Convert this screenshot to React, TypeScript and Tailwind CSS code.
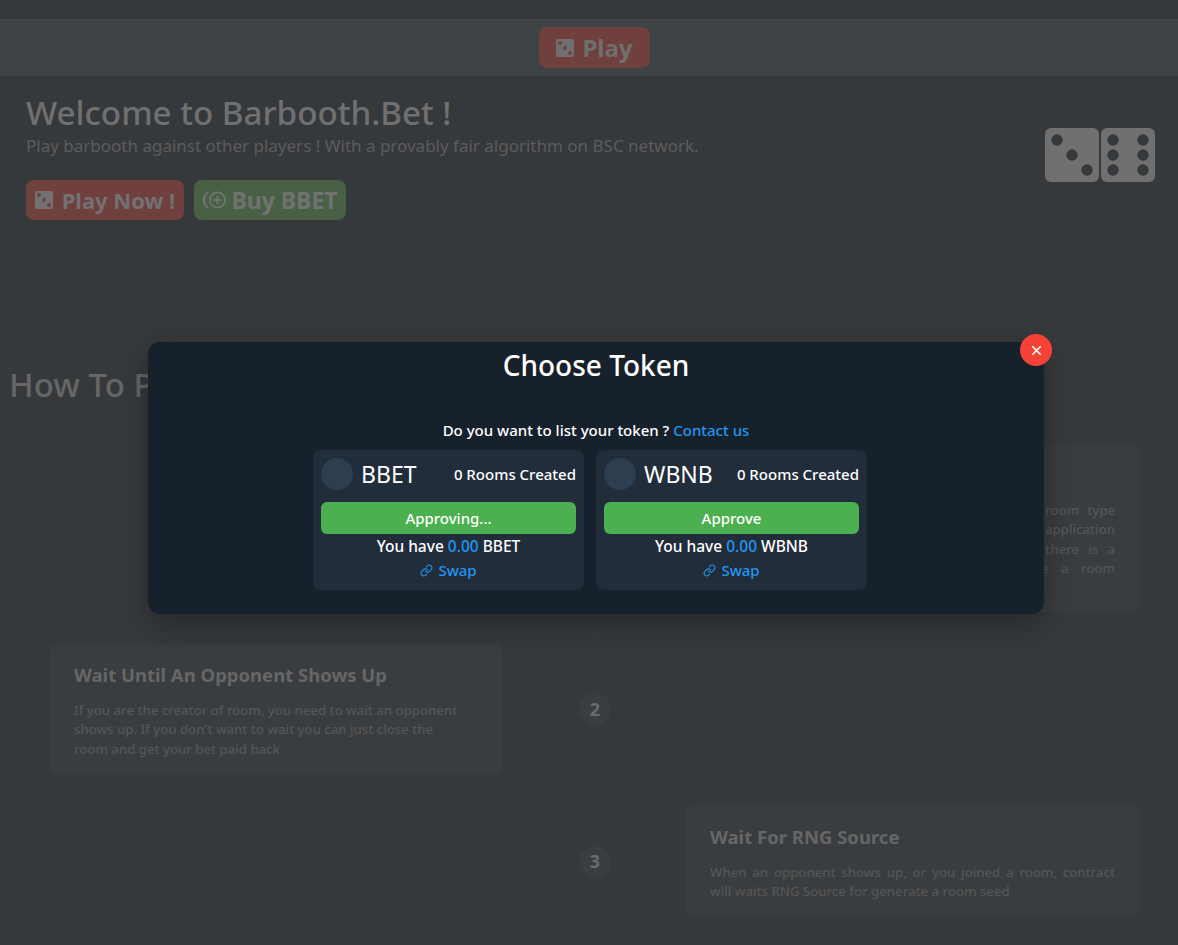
import { Link, X } from 'lucide-react'

const TOKENS = [
  { name: 'BBET', action: 'Approving...' },
  { name: 'WBNB', action: 'Approve' },
]

const THREE = [
  [12, 12],
  [27, 27],
  [42, 42],
]
const SIX = [
  [12, 12],
  [12, 27],
  [12, 42],
  [42, 12],
  [42, 27],
  [42, 42],
]

function Die({ pips, className, pipClass }: { pips: number[][]; className: string; pipClass: string }) {
  return (
    <svg viewBox="0 0 54 54" className={className}>
      <rect width="54" height="54" rx="6" fill="currentColor" />
      {pips.map(([x, y]) => (
        <circle key={`${x}-${y}`} cx={x} cy={y} r="5.7" className={pipClass} />
      ))}
    </svg>
  )
}

function CoinPlus() {
  return (
    <svg viewBox="0 0 24 20" className="h-[20px] w-[24px]" fill="none" stroke="currentColor" strokeWidth="1.8">
      <circle cx="15.5" cy="10" r="7.6" />
      <path d="M15.5 6v8M11.5 10h8" strokeWidth="2" />
      <path d="M6 2.4a9.6 9.6 0 0 0 0 15.2" />
      <path d="M3.4 4a9.6 9.6 0 0 0 0 12" strokeWidth="1.4" />
    </svg>
  )
}

function StepCard({
  title,
  lines,
  justify,
  className,
}: {
  title: string
  lines: string[]
  justify?: boolean
  className: string
}) {
  return (
    <div className={`rounded-lg bg-[#3a3d40] pt-5 ${className}`}>
      <h3 className="text-[18.5px] leading-[22px] font-bold text-[#666666]">{title}</h3>
      <p className="mt-[14.5px] text-[13.2px] leading-[19.5px] font-medium text-[#555555]">
        {lines.map((line, i) => (
          <span key={line} className={justify && i < lines.length - 1 ? 'block [text-align-last:justify]' : 'block'}>
            {line}
          </span>
        ))}
      </p>
    </div>
  )
}

function Dot({ n }: { n: number }) {
  return (
    <>
      <div className="w-[2px] flex-1 bg-[#383b3e]" />
      <div className="flex h-8 w-8 items-center justify-center rounded-full bg-[#3b3e40] text-[18px] font-bold text-[#6c6c6c]">
        {n}
      </div>
      <div className="w-[2px] flex-1 bg-[#383b3e]" />
      <div className="h-8 w-[2px] bg-[#383b3e]" />
    </>
  )
}

export default function App() {
  return (
    <div className="relative h-[945px] overflow-hidden bg-[#36393c] pt-[19px] font-['Noto_Sans',sans-serif]">
      <nav className="flex h-[57px] items-center justify-center bg-[#3e4345] pl-[11px]">
        <button className="flex h-[41px] w-[111px] items-center justify-center gap-2 rounded-lg bg-[#6f403d] text-[24px] font-bold text-[#6f6f6f]">
          <Die pips={THREE} className="h-[18px] w-[18px]" pipClass="fill-[#6f403d]" />
          Play
        </button>
      </nav>

      <section className="flex items-center justify-between pt-[17px] pr-[23px] pl-[26px]">
        <div>
          <h1 className="text-[33.2px] leading-[40px] font-medium text-[#707070]">Welcome to Barbooth.Bet !</h1>
          <p className="mt-[3px] text-[17px] leading-[20px] text-[#5c5c5c]">
            Play barbooth against other players ! With a provably fair algorithm on BSC network.
          </p>
          <div className="mt-[24px] flex gap-[10px]">
            <button className="flex h-10 w-[158px] items-center justify-center gap-[9px] rounded-lg bg-[#6f403d] text-[22px] font-bold text-[#727272]">
              <Die pips={THREE} className="h-[18px] w-[18px]" pipClass="fill-[#6f403d]" />
              Play Now !
            </button>
            <button className="flex h-10 w-[152px] items-center justify-center gap-[5px] rounded-lg bg-[#496044] text-[23px] font-bold text-[#727272]">
              <CoinPlus />
              Buy BBET
            </button>
          </div>
        </div>
        <div className="mb-[4px] flex gap-[2px] text-[#707070]">
          <Die pips={THREE} className="h-[54px] w-[54px]" pipClass="fill-[#36393c]" />
          <Die pips={SIX} className="h-[54px] w-[54px]" pipClass="fill-[#36393c]" />
        </div>
      </section>

      <h2 className="mt-[145px] pl-[9px] text-[33px] leading-[40px] font-medium text-[#666666]">How To Play</h2>

      <div className="mt-[39px] pr-[38px] pl-[50px]">
        <div className="grid grid-cols-[453px_182px_1fr]">
          <div />
          <div className="flex flex-col items-center pl-[2px]">
            <Dot n={1} />
          </div>
          <div className="pb-8">
            <StepCard
              title="Create Or Join A Room"
              className="h-[168px] px-[25px]"
              justify
              lines={[
                'Connect your wallet and choose a token and a room type',
                'then approve the spending of your token with the application',
                'so you can bet with it. Join an open room if there is a',
                'room for your chosen bet amount, otherwise a room',
                'will be created',
              ]}
            />
          </div>

          <div className="pb-8">
            <StepCard
              title="Wait Until An Opponent Shows Up"
              className="h-[130px] px-6"
              lines={[
                'If you are the creator of room, you need to wait an opponent',
                "shows up. If you don't want to wait you can just close the",
                'room and get your bet paid back',
              ]}
            />
          </div>
          <div className="flex flex-col items-center pl-[2px]">
            <Dot n={2} />
          </div>
          <div />

          <div />
          <div className="flex flex-col items-center pl-[2px]">
            <Dot n={3} />
          </div>
          <div className="pb-8">
            <StepCard
              title="Wait For RNG Source"
              className="h-[111px] px-[25px]"
              justify
              lines={[
                'When an opponent shows up, or you joined a room, contract',
                'will waits RNG Source for generate a room seed',
              ]}
            />
          </div>
        </div>
      </div>

      {/* token modal */}
      <div className="absolute top-[342px] left-[148px] h-[272px] w-[896px] rounded-xl bg-[#17212b] shadow-[0_10px_30px_rgba(0,0,0,0.3)]">
        <button className="absolute -top-2 -right-2 flex h-8 w-8 items-center justify-center rounded-full bg-[#f44336] text-white">
          <X size={15} strokeWidth={2.5} />
        </button>
        <h2 className="pt-[5px] text-center text-[28px] leading-[36px] font-medium text-white">Choose Token</h2>
        <p className="mt-[37px] text-center text-[15px] leading-[20px] font-medium text-white">
          Do you want to list your token ? <span className="text-[#2196f3]">Contact us</span>
        </p>
        <div className="mt-[10px] flex justify-center">
          {TOKENS.map((t) => (
            <div key={t.name} className="mr-3 h-[140px] w-[271px] rounded-lg bg-[#212d3b] p-2 text-white">
              <div className="flex items-center">
                <div className="h-8 w-8 rounded-full bg-[#2c3e50]" />
                <span className="ml-2 flex-1 text-[23px] leading-8">{t.name}</span>
                <span className="text-[15px] font-medium">0 Rooms Created</span>
              </div>
              <button className="mt-3 h-8 w-full rounded-md bg-[#4caf50] text-[15px] font-medium">{t.action}</button>
              <div className="text-center text-[15.5px] leading-6 font-medium">
                You have <span className="text-[#2196f3]">0.00</span> {t.name}
              </div>
              <div className="flex items-center justify-center gap-[5px] text-[15px] leading-6 font-medium text-[#2196f3]">
                <Link size={13} />
                Swap
              </div>
            </div>
          ))}
        </div>
      </div>
    </div>
  )
}
